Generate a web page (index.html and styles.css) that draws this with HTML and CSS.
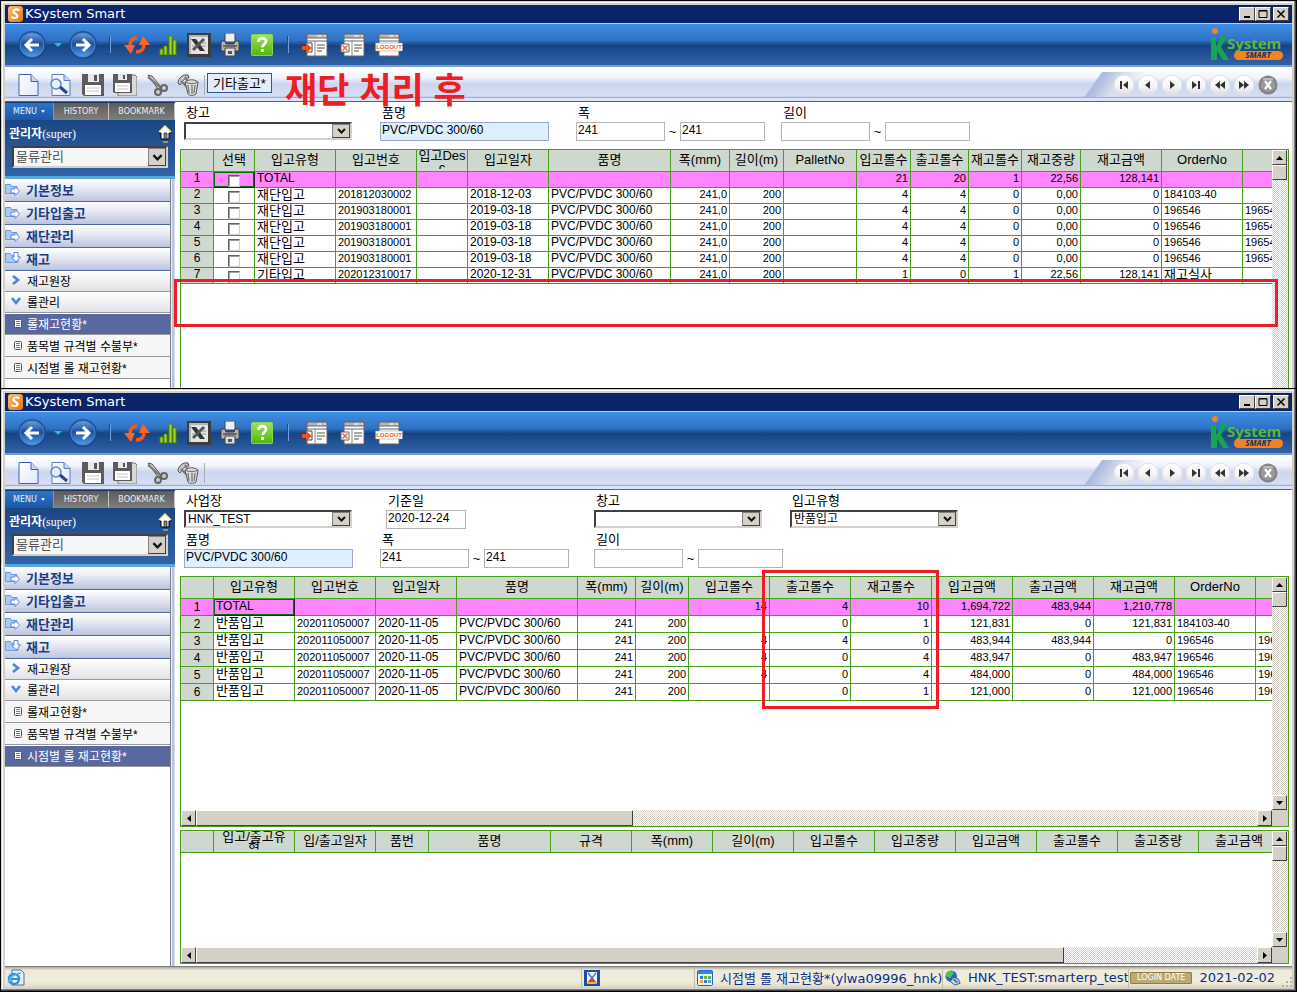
FILE: index.html
```html
<!DOCTYPE html>
<html lang="ko">
<head>
<meta charset="utf-8">
<title>KSystem Smart</title>
<link rel="stylesheet" href="styles.css">
</head>
<body>
<svg class="defs" aria-hidden="true">
  <defs>
    <linearGradient id="g-ball" x1="0" y1="0" x2="0" y2="1"><stop offset="0" stop-color="#6a9ed8"/><stop offset=".45" stop-color="#1d4f9c"/><stop offset="1" stop-color="#4f9be8"/></linearGradient>
    <linearGradient id="g-help" x1="0" y1="0" x2="0" y2="1"><stop offset="0" stop-color="#a0e060"/><stop offset="1" stop-color="#4fb808"/></linearGradient>
    <linearGradient id="g-nav" x1="0" y1="0" x2="0" y2="1"><stop offset="0" stop-color="#fff"/><stop offset=".6" stop-color="#f4f4f6"/><stop offset="1" stop-color="#dcdce2"/></linearGradient>
    <linearGradient id="g-page" x1="0" y1="0" x2="1" y2="1"><stop offset="0" stop-color="#fff"/><stop offset="1" stop-color="#dfe8fa"/></linearGradient>
    <linearGradient id="g-s" x1="0" y1="0" x2="1" y2="1"><stop offset="0" stop-color="#ffc070"/><stop offset="1" stop-color="#e8700c"/></linearGradient>
  </defs>
  <symbol id="i-app" viewBox="0 0 16 16"><rect width="15" height="16" rx="3" fill="url(#g-s)"/><path d="M11.500 4.500C9 2.500 5.500 3.500 5.500 5.700S10 8 9.500 10.200 6 12.500 3.500 11" fill="none" stroke="#fff" stroke-width="2.200"/></symbol>
  <symbol id="i-back" viewBox="0 0 30 30"><circle cx="15" cy="15" r="14" fill="#17458c" opacity=".7"/><circle cx="15" cy="15" r="12" fill="url(#g-ball)" stroke="#4c86cc"/><path d="M22 15H10M15 9l-6 6 6 6" fill="none" stroke="#fff" stroke-width="3"/></symbol>
  <symbol id="i-fwd" viewBox="0 0 30 30"><circle cx="15" cy="15" r="14" fill="#17458c" opacity=".7"/><circle cx="15" cy="15" r="12" fill="url(#g-ball)" stroke="#4c86cc"/><path d="M8 15h12M15 9l6 6-6 6" fill="none" stroke="#fff" stroke-width="3"/></symbol>
  <symbol id="i-drop" viewBox="0 0 8 4"><path d="M0 0h8L4 4z" fill="#2fb4e0"/></symbol>
  <symbol id="i-refresh" viewBox="0 0 26 20"><path d="M13 3C8 3 6 6 6 11" fill="none" stroke="#f4581c" stroke-width="3.500"/><path d="M0 10h11l-4 9z" fill="#ff6426"/><path d="M12 17c6 0 8-3 8-8" fill="none" stroke="#f4581c" stroke-width="3.500"/><path d="M15 10h11l-7-9z" fill="#ff6426"/></symbol>
  <symbol id="i-bars" viewBox="0 0 18 20"><path d="M1 14h3v6H1zM5 11h3v9H5zM10 1h3v19h-3zM14 5h3v15h-3z" fill="#a8d818" stroke="#4c8a0a"/></symbol>
  <symbol id="i-excel" viewBox="0 0 24 24"><path d="M0 0h24v24H0z" fill="#3c3c3c"/><path d="M2 2h19v19H2z" fill="#b4b4b4"/><path d="M4 4h17v17H4z" fill="#e4e4e4"/><path d="M4 6h5l9 12h-5z" fill="#333"/><path d="M17 6L6 17" stroke="#555" stroke-width="3"/><path d="M14 10h5M15 13h4M5 13h4" stroke="#999"/></symbol>
  <symbol id="i-print" viewBox="0 0 20 24"><path d="M5 0h10v9H5z" fill="#eee" stroke="#444"/><path d="M1 8h4l1 3h8l1-3h4v10H1z" fill="#b4b4b4" stroke="#3c3c3c"/><path d="M3 13h14" stroke="#666" stroke-width="2"/><path d="M5 15h10v8H5z" fill="#ddd" stroke="#444"/><path d="M8 18h4v3H8z" fill="#555"/></symbol>
  <symbol id="i-help" viewBox="0 0 22 22"><rect x=".5" y=".5" width="21" height="21" rx="1" fill="url(#g-help)" stroke="#8ad848"/><path d="M7.500 8c0-5 7.500-5 7.500-.8 0 3-3.500 3-3.500 6" fill="none" stroke="#fff" stroke-width="2.800"/><path d="M10 15h3v3h-3z" fill="#fff"/></symbol>
  <symbol id="i-win" viewBox="0 0 28 24"><path d="M6 1h20v22H6z" fill="#fff" stroke="#666"/><path d="M6 1h20v4H6z" fill="#aeb4bc" stroke="#666"/><path d="M16 3h5M23 3h2" stroke="#fff"/><path d="M6 8h20" stroke="#667"/><path d="M14 8v15" stroke="#888"/><path d="M16 12h8M16 15h8M16 18h5" stroke="#555"/></symbol>
  <symbol id="i-winout" viewBox="0 0 28 24"><use href="#i-win"/><path d="M5 10h6v9H5" fill="#fff" stroke="#444"/><path d="M1 13h4v-3l6 5-6 5v-3H1z" fill="#f05010"/></symbol>
  <symbol id="i-winx" viewBox="0 0 28 24"><use href="#i-win"/><path d="M3 11h8v8H3z" fill="#fff" stroke="#666"/><path d="M4.500 12.500l5 5M9.500 12.500l-5 5" stroke="#e86030" stroke-width="1.300"/></symbol>
  <symbol id="i-page" viewBox="0 0 22 22"><path d="M1 .5h12l7 7v14H1z" fill="url(#g-page)" stroke="#3c62b4"/><path d="M13 .5v7h7" fill="#c8d8f4" stroke="#3c62b4"/></symbol>
  <symbol id="i-find" viewBox="0 0 22 22"><path d="M2 .5h12l6 6v15H2z" fill="url(#g-page)" stroke="#5a7cc4"/><path d="M14 .5v6h6" fill="#c8d8f4" stroke="#5a7cc4"/><circle cx="6" cy="10" r="5" fill="#e4f0fc" stroke="#6284cc" stroke-width="1.500"/><path d="M10 13l7 6" stroke="#2c4888" stroke-width="3"/></symbol>
  <symbol id="i-save" viewBox="0 0 22 22"><path d="M0 0h22v22H2l-2-2z" fill="#5c5c5c"/><path d="M6 0h11v8H6z" fill="#e8e8e8"/><path d="M12 1h3v6h-3z" fill="#555"/><path d="M3 11h16v10H3z" fill="#fff"/><path d="M5 14h12M5 17h12" stroke="#c4c4c4"/></symbol>
  <symbol id="i-saveall" viewBox="0 0 24 22"><path d="M5 1h17l2 2v19H5z" fill="#d8d8d8" stroke="#777"/><path d="M0 0h19v19H1l-1-1z" fill="#5c5c5c"/><path d="M5 0h9v6H5z" fill="#e8e8e8"/><path d="M10 1h2v4h-2z" fill="#555"/><path d="M2 9h15v9H2z" fill="#fff"/><path d="M4 12h11M4 15h11" stroke="#c4c4c4"/></symbol>
  <symbol id="i-cut" viewBox="0 0 22 22"><path d="M1 1l4 1 9 11-3 2z" fill="#ccc" stroke="#555"/><path d="M1 3l7 6 6 5" stroke="#777" stroke-width="2"/><circle cx="17" cy="14" r="3" fill="#ccc" stroke="#666" stroke-width="2"/><circle cx="11" cy="18" r="3" fill="#ccc" stroke="#666" stroke-width="2"/></symbol>
  <symbol id="i-trash" viewBox="0 0 22 22"><path d="M1 9c0-5 5-9 10-8l1 3c-5 0-7 4-9 7z" fill="#c4c4c4" stroke="#555"/><path d="M4 7l6 6M8 3l3 5" stroke="#777" stroke-width="2"/><path d="M8 8c4-3 9-3 13 0l-2 12c-3 2-6 2-8 0z" fill="#ddd" stroke="#555"/><path d="M8 8c4 2 9 2 13 0M11 11l1 8M15 11v9M18 11l-1 8" stroke="#777" fill="none" stroke-width="1.300"/></symbol>
  <symbol id="n-ball" viewBox="0 0 22 22"><circle cx="11" cy="11" r="10" fill="url(#g-nav)" stroke="#e0e0e4"/></symbol>
  <symbol id="n-first" viewBox="0 0 22 22"><use href="#n-ball"/><path d="M7 7h2v8H7zM15 7v8l-5-4z" fill="#333"/></symbol>
  <symbol id="n-prev" viewBox="0 0 22 22"><use href="#n-ball"/><path d="M13 7v8l-5-4z" fill="#333"/></symbol>
  <symbol id="n-next" viewBox="0 0 22 22"><use href="#n-ball"/><path d="M9 7v8l5-4z" fill="#333"/></symbol>
  <symbol id="n-last" viewBox="0 0 22 22"><use href="#n-ball"/><path d="M7 7v8l5-4zM13 7h2v8h-2z" fill="#333"/></symbol>
  <symbol id="n-rew" viewBox="0 0 22 22"><use href="#n-ball"/><path d="M11 7v8l-5-4zM16 7v8l-5-4z" fill="#333"/></symbol>
  <symbol id="n-ff" viewBox="0 0 22 22"><use href="#n-ball"/><path d="M6 7v8l5-4zM11 7v8l5-4z" fill="#333"/></symbol>
  <symbol id="n-close" viewBox="0 0 22 22"><circle cx="11" cy="11" r="9.500" fill="#858585"/><circle cx="11" cy="11" r="7" fill="#9a9a9a"/><path d="M8 7l6 8M14 7l-6 8" stroke="#fff" stroke-width="2.200"/><path d="M6 5h10" stroke="#ddd"/></symbol>
  <symbol id="i-folder" viewBox="0 0 16 14"><path d="M.5 2.500h5l1 2H12v7H.5z" fill="#a8ccf8" stroke="#6a9ae8"/><path d="M6 7h4V4.500L14.500 9 10 13.500V11H6z" fill="#fff" stroke="#5a86d8"/></symbol>
  <symbol id="i-folderdown" viewBox="0 0 16 14"><path d="M.5 2.500h5l1 2H13v7H.5z" fill="#a8ccf8" stroke="#6a9ae8"/><path d="M9 1.500h4V6h2.500L11 11 6.500 6H9z" fill="#fff" stroke="#5a86d8"/></symbol>
  <symbol id="i-right" viewBox="0 0 10 10"><path d="M2 1l5 4-5 4" fill="none" stroke="#4c86dc" stroke-width="2.600"/></symbol>
  <symbol id="i-down" viewBox="0 0 10 10"><path d="M1 2l4 5 4-5" fill="none" stroke="#4c86dc" stroke-width="2.600"/></symbol>
  <symbol id="i-doc" viewBox="0 0 8 9"><rect x=".5" y=".5" width="7" height="8" rx="1" fill="#fff" stroke="#555"/><path d="M2 2.500h4M2 4.500h4M2 6.500h4" stroke="#777"/></symbol>
  <symbol id="i-home" viewBox="0 0 14 18"><path d="M7 1L1 7v1h2v6h8V8h2V7z" fill="#fff" stroke="#000"/><path d="M1 7l6-6 6 6" fill="none" stroke="#f8e890" stroke-width="1.500"/><path d="M6 8h3v6H6z" fill="#888" stroke="#000" stroke-width=".6"/><path d="M5 17h5" stroke="#f0e040"/></symbol>
  <symbol id="i-chev" viewBox="0 0 9 6"><path d="M1 1l3.500 3.500L8 1" fill="none" stroke="#111" stroke-width="2"/></symbol>
  <symbol id="a-up" viewBox="0 0 7 4"><path d="M3.500 0L7 4H0z"/></symbol>
  <symbol id="a-down" viewBox="0 0 7 4"><path d="M0 0h7L3.500 4z"/></symbol>
  <symbol id="a-left" viewBox="0 0 4 7"><path d="M4 0v7L0 3.500z"/></symbol>
  <symbol id="a-right" viewBox="0 0 4 7"><path d="M0 0v7l4-3.500z"/></symbol>
  <symbol id="i-min" viewBox="0 0 14 12"><path d="M4 9h6" stroke="#000" stroke-width="2"/></symbol>
  <symbol id="i-max" viewBox="0 0 14 12"><path d="M3 2.500h8v7H3zM3 3h8" fill="none" stroke="#000"/></symbol>
  <symbol id="i-x" viewBox="0 0 14 12"><path d="M3.500 2.500l7 7M10.500 2.500l-7 7" stroke="#000" stroke-width="1.500"/></symbol>
</svg>

<section class="window">
  <header class="titlebar">
    <svg width="16" height="16"><use href="#i-app"/></svg><h1>KSystem Smart</h1>
    <div class="caption-buttons"><button aria-label="Minimize"><svg width="14" height="12"><use href="#i-min"/></svg></button><button aria-label="Maximize"><svg width="14" height="12"><use href="#i-max"/></svg></button><button class="caption-close" aria-label="Close"><svg width="14" height="12"><use href="#i-x"/></svg></button></div>
  </header>
  <div class="bluebar">
    <div class="bluebar-tools">
      <button aria-label="Back"><svg width="30" height="30"><use href="#i-back"/></svg></button>
      <button aria-label="Recent"><svg width="8" height="4"><use href="#i-drop"/></svg></button>
      <button aria-label="Forward"><svg width="30" height="30"><use href="#i-fwd"/></svg></button>
      <i class="sep"></i>
      <button aria-label="Refresh"><svg width="26" height="20"><use href="#i-refresh"/></svg></button>
      <button aria-label="Chart"><svg width="18" height="20"><use href="#i-bars"/></svg></button>
      <button aria-label="Excel"><svg width="24" height="24"><use href="#i-excel"/></svg></button>
      <button aria-label="Print"><svg width="20" height="24"><use href="#i-print"/></svg></button>
      <button aria-label="Help"><svg width="22" height="22"><use href="#i-help"/></svg></button>
      <i class="sep"></i>
      <button aria-label="Exit"><svg width="28" height="24"><use href="#i-winout"/></svg></button>
      <button aria-label="Close all"><svg width="28" height="24"><use href="#i-winx"/></svg></button>
      <button aria-label="Logout"><svg width="28" height="24" viewBox="0 0 28 24"><path d="M4 1h20v22H4z" fill="#fff" stroke="#666"/><path d="M4 1h20v4H4z" fill="#aeb4bc" stroke="#666"/><path d="M14 3h5M21 3h2" stroke="#fff"/><path d="M4 8h20" stroke="#667"/><path d="M.5 10h27v8H.5z" fill="#fff" stroke="#888" stroke-width=".5"/><text x="14" y="16" text-anchor="middle" class="logout-text">LOGOUT</text></svg></button>
    </div>
    <svg width="76" height="36" viewBox="0 0 76 36"><circle cx="6" cy="4" r="3" fill="#f58220"/><path d="M2 10h5v10l6-12h6l-7 12 8 13h-6l-6-9v9H2z" fill="#16a550"/><text x="18" y="22" class="logo-name">System</text><rect x="25" y="24" width="49" height="9" rx="4.500" fill="#f58220"/><text x="49" y="31" text-anchor="middle" class="logo-sub">SMART</text></svg>
  </div>
  <div class="toolbar">
    <div class="toolbar-tools">
      <button aria-label="New"><svg width="22" height="22"><use href="#i-page"/></svg></button>
      <button aria-label="Search"><svg width="22" height="22"><use href="#i-find"/></svg></button>
      <button aria-label="Save"><svg width="22" height="22"><use href="#i-save"/></svg></button>
      <button aria-label="Save all"><svg width="24" height="22"><use href="#i-saveall"/></svg></button>
      <button aria-label="Cut"><svg width="22" height="22"><use href="#i-cut"/></svg></button>
      <button aria-label="Delete"><svg width="22" height="22"><use href="#i-trash"/></svg></button>
      <i class="sep sep-grey"></i>
    </div>
    <button class="action">기타출고*</button>
    <div class="nav">
      <button aria-label="First"><svg width="22" height="22"><use href="#n-first"/></svg></button>
      <button aria-label="Previous"><svg width="22" height="22"><use href="#n-prev"/></svg></button>
      <button aria-label="Next"><svg width="22" height="22"><use href="#n-next"/></svg></button>
      <button aria-label="Last"><svg width="22" height="22"><use href="#n-last"/></svg></button>
      <button aria-label="Page back"><svg width="22" height="22"><use href="#n-rew"/></svg></button>
      <button aria-label="Page forward"><svg width="22" height="22"><use href="#n-ff"/></svg></button>
      <button aria-label="Close page"><svg width="22" height="22"><use href="#n-close"/></svg></button>
    </div>
  </div>
  <div class="workspace">
    <aside class="sidebar">
      <div class="tabs"><button class="tab tab-on">MENU <svg width="4" height="3"><use href="#a-down"/></svg></button><button class="tab">HISTORY</button><button class="tab">BOOKMARK</button></div>
      <div class="account">
        <div class="account-row"><span>관리자<small>(super)</small></span><svg width="14" height="18"><use href="#i-home"/></svg></div>
        <div class="combo combo-module"><select aria-label="모듈"><option>물류관리</option></select><span class="combo-arrow"><svg width="11" height="7"><use href="#i-chev"/></svg></span></div>
      </div>
      <nav class="menu">
        <a class="m1" href="#"><svg width="16" height="14"><use href="#i-folder"/></svg>기본정보</a>
        <a class="m1" href="#"><svg width="16" height="14"><use href="#i-folder"/></svg>기타입출고</a>
        <a class="m1" href="#"><svg width="16" height="14"><use href="#i-folder"/></svg>재단관리</a>
        <a class="m1" href="#"><svg width="16" height="14"><use href="#i-folderdown"/></svg>재고</a>
        <a class="m2" href="#"><svg width="10" height="10"><use href="#i-right"/></svg>재고원장</a>
        <a class="m2" href="#"><svg width="10" height="10"><use href="#i-down"/></svg>롤관리</a>
        <a class="m3 m3-on" href="#"><svg width="8" height="9"><use href="#i-doc"/></svg>롤재고현황*</a>
        <a class="m3" href="#"><svg width="8" height="9"><use href="#i-doc"/></svg>품목별 규격별 수불부*</a>
        <a class="m3" href="#"><svg width="8" height="9"><use href="#i-doc"/></svg>시점별 롤 재고현황*</a>
      </nav>
    </aside>
    <main class="content">
      <div class="filters filters-a">
        <div class="field"><label for="a1">창고</label><div class="combo"><select id="a1"><option></option></select><span class="combo-arrow"><svg width="9" height="6"><use href="#i-chev"/></svg></span></div></div>
        <div class="field"><label for="a2">품명</label><input id="a2" class="wide" value="PVC/PVDC 300/60"></div>
        <div class="field"><label for="a3">폭</label><div class="range"><input id="a3" value="241"><span>~</span><input aria-label="폭 끝" value="241"></div></div>
        <div class="field"><label for="a4">길이</label><div class="range"><input id="a4"><span>~</span><input aria-label="길이 끝"></div></div>
      </div>
      <div class="sheet sheet-top">
        <div class="sheet-view">
          <table class="rows16">
            <colgroup><col class="w33"><col class="w41"><col class="w81"><col class="w81"><col class="w51"><col class="w81"><col class="w122"><col class="w59"><col class="w54"><col class="w73"><col class="w54"><col class="w58"><col class="w53"><col class="w59"><col class="w81"><col class="w81"><col class="w81"></colgroup>
            <thead><tr><th></th><th>선택</th><th>입고유형</th><th>입고번호</th><th><div class="two">입고Desc</div></th><th>입고일자</th><th>품명</th><th>폭(mm)</th><th>길이(m)</th><th>PalletNo</th><th>입고롤수</th><th>출고롤수</th><th>재고롤수</th><th>재고중량</th><th>재고금액</th><th>OrderNo</th><th></th></tr></thead>
            <tbody>
              <tr class="total"><td class="no">1</td><td class="cur c"><input type="checkbox" aria-label="1"></td><td>TOTAL</td><td></td><td></td><td></td><td></td><td></td><td></td><td></td><td class="n">21</td><td class="n">20</td><td class="n">1</td><td class="n">22,56</td><td class="n">128,141</td><td></td><td></td></tr>
              <tr><td class="no">2</td><td class="c"><input type="checkbox" aria-label="2"></td><td class="k">재단입고</td><td class="s">201812030002</td><td></td><td>2018-12-03</td><td>PVC/PVDC 300/60</td><td class="n">241,0</td><td class="n">200</td><td></td><td class="n">4</td><td class="n">4</td><td class="n">0</td><td class="n">0,00</td><td class="n">0</td><td class="s">184103-40</td><td></td></tr>
              <tr><td class="no">3</td><td class="c"><input type="checkbox" aria-label="3"></td><td class="k">재단입고</td><td class="s">201903180001</td><td></td><td>2019-03-18</td><td>PVC/PVDC 300/60</td><td class="n">241,0</td><td class="n">200</td><td></td><td class="n">4</td><td class="n">4</td><td class="n">0</td><td class="n">0,00</td><td class="n">0</td><td class="s">196546</td><td class="s">196546</td></tr>
              <tr><td class="no">4</td><td class="c"><input type="checkbox" aria-label="4"></td><td class="k">재단입고</td><td class="s">201903180001</td><td></td><td>2019-03-18</td><td>PVC/PVDC 300/60</td><td class="n">241,0</td><td class="n">200</td><td></td><td class="n">4</td><td class="n">4</td><td class="n">0</td><td class="n">0,00</td><td class="n">0</td><td class="s">196546</td><td class="s">196546</td></tr>
              <tr><td class="no">5</td><td class="c"><input type="checkbox" aria-label="5"></td><td class="k">재단입고</td><td class="s">201903180001</td><td></td><td>2019-03-18</td><td>PVC/PVDC 300/60</td><td class="n">241,0</td><td class="n">200</td><td></td><td class="n">4</td><td class="n">4</td><td class="n">0</td><td class="n">0,00</td><td class="n">0</td><td class="s">196546</td><td class="s">196546</td></tr>
              <tr><td class="no">6</td><td class="c"><input type="checkbox" aria-label="6"></td><td class="k">재단입고</td><td class="s">201903180001</td><td></td><td>2019-03-18</td><td>PVC/PVDC 300/60</td><td class="n">241,0</td><td class="n">200</td><td></td><td class="n">4</td><td class="n">4</td><td class="n">0</td><td class="n">0,00</td><td class="n">0</td><td class="s">196546</td><td class="s">196546</td></tr>
              <tr><td class="no">7</td><td class="c"><input type="checkbox" aria-label="7"></td><td class="k">기타입고</td><td class="s">202012310017</td><td></td><td>2020-12-31</td><td>PVC/PVDC 300/60</td><td class="n">241,0</td><td class="n">200</td><td></td><td class="n">1</td><td class="n">0</td><td class="n">1</td><td class="n">22,56</td><td class="n">128,141</td><td class="k">재고실사</td><td></td></tr>
            </tbody>
          </table>
        </div>
        <div class="vscroll"><button aria-label="위로"><svg width="7" height="4"><use href="#a-up"/></svg></button><i class="thumb"></i></div>
      </div>
    </main>
  </div>
  <div class="note">재단 처리 후</div>
  <div class="mark mark-row"></div>
</section>

<section class="window window-last">
  <header class="titlebar">
    <svg width="16" height="16"><use href="#i-app"/></svg><h1>KSystem Smart</h1>
    <div class="caption-buttons"><button aria-label="Minimize"><svg width="14" height="12"><use href="#i-min"/></svg></button><button aria-label="Maximize"><svg width="14" height="12"><use href="#i-max"/></svg></button><button class="caption-close" aria-label="Close"><svg width="14" height="12"><use href="#i-x"/></svg></button></div>
  </header>
  <div class="bluebar">
    <div class="bluebar-tools">
      <button aria-label="Back"><svg width="30" height="30"><use href="#i-back"/></svg></button>
      <button aria-label="Recent"><svg width="8" height="4"><use href="#i-drop"/></svg></button>
      <button aria-label="Forward"><svg width="30" height="30"><use href="#i-fwd"/></svg></button>
      <i class="sep"></i>
      <button aria-label="Refresh"><svg width="26" height="20"><use href="#i-refresh"/></svg></button>
      <button aria-label="Chart"><svg width="18" height="20"><use href="#i-bars"/></svg></button>
      <button aria-label="Excel"><svg width="24" height="24"><use href="#i-excel"/></svg></button>
      <button aria-label="Print"><svg width="20" height="24"><use href="#i-print"/></svg></button>
      <button aria-label="Help"><svg width="22" height="22"><use href="#i-help"/></svg></button>
      <i class="sep"></i>
      <button aria-label="Exit"><svg width="28" height="24"><use href="#i-winout"/></svg></button>
      <button aria-label="Close all"><svg width="28" height="24"><use href="#i-winx"/></svg></button>
      <button aria-label="Logout"><svg width="28" height="24" viewBox="0 0 28 24"><path d="M4 1h20v22H4z" fill="#fff" stroke="#666"/><path d="M4 1h20v4H4z" fill="#aeb4bc" stroke="#666"/><path d="M14 3h5M21 3h2" stroke="#fff"/><path d="M4 8h20" stroke="#667"/><path d="M.5 10h27v8H.5z" fill="#fff" stroke="#888" stroke-width=".5"/><text x="14" y="16" text-anchor="middle" class="logout-text">LOGOUT</text></svg></button>
    </div>
    <svg width="76" height="36" viewBox="0 0 76 36"><circle cx="6" cy="4" r="3" fill="#f58220"/><path d="M2 10h5v10l6-12h6l-7 12 8 13h-6l-6-9v9H2z" fill="#16a550"/><text x="18" y="22" class="logo-name">System</text><rect x="25" y="24" width="49" height="9" rx="4.500" fill="#f58220"/><text x="49" y="31" text-anchor="middle" class="logo-sub">SMART</text></svg>
  </div>
  <div class="toolbar">
    <div class="toolbar-tools">
      <button aria-label="New"><svg width="22" height="22"><use href="#i-page"/></svg></button>
      <button aria-label="Search"><svg width="22" height="22"><use href="#i-find"/></svg></button>
      <button aria-label="Save"><svg width="22" height="22"><use href="#i-save"/></svg></button>
      <button aria-label="Save all"><svg width="24" height="22"><use href="#i-saveall"/></svg></button>
      <button aria-label="Cut"><svg width="22" height="22"><use href="#i-cut"/></svg></button>
      <button aria-label="Delete"><svg width="22" height="22"><use href="#i-trash"/></svg></button>
      <i class="sep sep-grey"></i>
    </div>
    <div class="nav">
      <button aria-label="First"><svg width="22" height="22"><use href="#n-first"/></svg></button>
      <button aria-label="Previous"><svg width="22" height="22"><use href="#n-prev"/></svg></button>
      <button aria-label="Next"><svg width="22" height="22"><use href="#n-next"/></svg></button>
      <button aria-label="Last"><svg width="22" height="22"><use href="#n-last"/></svg></button>
      <button aria-label="Page back"><svg width="22" height="22"><use href="#n-rew"/></svg></button>
      <button aria-label="Page forward"><svg width="22" height="22"><use href="#n-ff"/></svg></button>
      <button aria-label="Close page"><svg width="22" height="22"><use href="#n-close"/></svg></button>
    </div>
  </div>
  <div class="workspace">
    <aside class="sidebar">
      <div class="tabs"><button class="tab tab-on">MENU <svg width="4" height="3"><use href="#a-down"/></svg></button><button class="tab">HISTORY</button><button class="tab">BOOKMARK</button></div>
      <div class="account">
        <div class="account-row"><span>관리자<small>(super)</small></span><svg width="14" height="18"><use href="#i-home"/></svg></div>
        <div class="combo combo-module"><select aria-label="모듈"><option>물류관리</option></select><span class="combo-arrow"><svg width="11" height="7"><use href="#i-chev"/></svg></span></div>
      </div>
      <nav class="menu">
        <a class="m1" href="#"><svg width="16" height="14"><use href="#i-folder"/></svg>기본정보</a>
        <a class="m1" href="#"><svg width="16" height="14"><use href="#i-folder"/></svg>기타입출고</a>
        <a class="m1" href="#"><svg width="16" height="14"><use href="#i-folder"/></svg>재단관리</a>
        <a class="m1" href="#"><svg width="16" height="14"><use href="#i-folderdown"/></svg>재고</a>
        <a class="m2" href="#"><svg width="10" height="10"><use href="#i-right"/></svg>재고원장</a>
        <a class="m2" href="#"><svg width="10" height="10"><use href="#i-down"/></svg>롤관리</a>
        <a class="m3" href="#"><svg width="8" height="9"><use href="#i-doc"/></svg>롤재고현황*</a>
        <a class="m3" href="#"><svg width="8" height="9"><use href="#i-doc"/></svg>품목별 규격별 수불부*</a>
        <a class="m3 m3-on" href="#"><svg width="8" height="9"><use href="#i-doc"/></svg>시점별 롤 재고현황*</a>
      </nav>
    </aside>
    <main class="content">
      <div class="filters filters-b">
        <div class="field"><label for="b1">사업장</label><div class="combo"><select id="b1"><option>HNK_TEST</option></select><span class="combo-arrow"><svg width="9" height="6"><use href="#i-chev"/></svg></span></div></div>
        <div class="field"><label for="b2">기준일</label><input id="b2" class="date" value="2020-12-24"></div>
        <div class="field"><label for="b3">창고</label><div class="combo"><select id="b3"><option></option></select><span class="combo-arrow"><svg width="9" height="6"><use href="#i-chev"/></svg></span></div></div>
        <div class="field"><label for="b4">입고유형</label><div class="combo"><select id="b4"><option>반품입고</option></select><span class="combo-arrow"><svg width="9" height="6"><use href="#i-chev"/></svg></span></div></div>
      </div>
      <div class="filters filters-c">
        <div class="field"><label for="c1">품명</label><input id="c1" class="wide" value="PVC/PVDC 300/60"></div>
        <div class="field"><label for="c2">폭</label><div class="range"><input id="c2" value="241"><span>~</span><input aria-label="폭 끝" value="241"></div></div>
        <div class="field"><label for="c3">길이</label><div class="range"><input id="c3"><span>~</span><input aria-label="길이 끝"></div></div>
      </div>
      <div class="sheet sheet-main">
        <div class="sheet-view">
          <table class="rows17">
            <colgroup><col class="w33"><col class="w81"><col class="w81"><col class="w81"><col class="w121"><col class="w58"><col class="w53"><col class="w81"><col class="w81"><col class="w81"><col class="w81"><col class="w81"><col class="w81"><col class="w81"><col class="w81"></colgroup>
            <thead><tr><th></th><th>입고유형</th><th>입고번호</th><th>입고일자</th><th>품명</th><th>폭(mm)</th><th>길이(m)</th><th>입고롤수</th><th>출고롤수</th><th>재고롤수</th><th>입고금액</th><th>출고금액</th><th>재고금액</th><th>OrderNo</th><th></th></tr></thead>
            <tbody>
              <tr class="total"><td class="no">1</td><td class="cur">TOTAL</td><td></td><td></td><td></td><td></td><td></td><td class="n">14</td><td class="n">4</td><td class="n">10</td><td class="n">1,694,722</td><td class="n">483,944</td><td class="n">1,210,778</td><td></td><td></td></tr>
              <tr><td class="no">2</td><td class="k">반품입고</td><td class="s">202011050007</td><td>2020-11-05</td><td>PVC/PVDC 300/60</td><td class="n">241</td><td class="n">200</td><td class="n"></td><td class="n">0</td><td class="n">1</td><td class="n">121,831</td><td class="n">0</td><td class="n">121,831</td><td class="s">184103-40</td><td></td></tr>
              <tr><td class="no">3</td><td class="k">반품입고</td><td class="s">202011050007</td><td>2020-11-05</td><td>PVC/PVDC 300/60</td><td class="n">241</td><td class="n">200</td><td class="n">4</td><td class="n">4</td><td class="n">0</td><td class="n">483,944</td><td class="n">483,944</td><td class="n">0</td><td class="s">196546</td><td class="s">196546</td></tr>
              <tr><td class="no">4</td><td class="k">반품입고</td><td class="s">202011050007</td><td>2020-11-05</td><td>PVC/PVDC 300/60</td><td class="n">241</td><td class="n">200</td><td class="n">4</td><td class="n">0</td><td class="n">4</td><td class="n">483,947</td><td class="n">0</td><td class="n">483,947</td><td class="s">196546</td><td class="s">196546</td></tr>
              <tr><td class="no">5</td><td class="k">반품입고</td><td class="s">202011050007</td><td>2020-11-05</td><td>PVC/PVDC 300/60</td><td class="n">241</td><td class="n">200</td><td class="n">4</td><td class="n">0</td><td class="n">4</td><td class="n">484,000</td><td class="n">0</td><td class="n">484,000</td><td class="s">196546</td><td class="s">196546</td></tr>
              <tr><td class="no">6</td><td class="k">반품입고</td><td class="s">202011050007</td><td>2020-11-05</td><td>PVC/PVDC 300/60</td><td class="n">241</td><td class="n">200</td><td class="n"></td><td class="n">0</td><td class="n">1</td><td class="n">121,000</td><td class="n">0</td><td class="n">121,000</td><td class="s">196546</td><td class="s">196546</td></tr>
            </tbody>
          </table>
        </div>
        <div class="vscroll"><button aria-label="위로"><svg width="7" height="4"><use href="#a-up"/></svg></button><i class="thumb"></i><i class="track"></i><button aria-label="아래로"><svg width="7" height="4"><use href="#a-down"/></svg></button></div>
        <div class="hscroll"><button aria-label="왼쪽"><svg width="4" height="7"><use href="#a-left"/></svg></button><i class="lane"><i class="thumb" style="width:41.2%"></i></i><button aria-label="오른쪽"><svg width="4" height="7"><use href="#a-right"/></svg></button></div>
        <i class="corner"></i>
      </div>
      <div class="sheet sheet-sub">
        <div class="sheet-view">
          <table>
            <colgroup><col class="w33"><col class="w81"><col class="w81"><col class="w53"><col class="w122"><col class="w81"><col class="w81"><col class="w81"><col class="w81"><col class="w81"><col class="w81"><col class="w81"><col class="w81"><col class="w81"></colgroup>
            <thead><tr><th></th><th><div class="two two-inset">입고/출고유형</div></th><th>입/출고일자</th><th>품번</th><th>품명</th><th>규격</th><th>폭(mm)</th><th>길이(m)</th><th>입고롤수</th><th>입고중량</th><th>입고금액</th><th>출고롤수</th><th>출고중량</th><th>출고금액</th></tr></thead>
          </table>
        </div>
        <div class="vscroll"><button aria-label="위로"><svg width="7" height="4"><use href="#a-up"/></svg></button><i class="thumb"></i><i class="track"></i><button aria-label="아래로"><svg width="7" height="4"><use href="#a-down"/></svg></button></div>
        <div class="hscroll"><button aria-label="왼쪽"><svg width="4" height="7"><use href="#a-left"/></svg></button><i class="lane"><i class="thumb" style="width:81.8%"></i></i><button aria-label="오른쪽"><svg width="4" height="7"><use href="#a-right"/></svg></button></div>
        <i class="corner"></i>
      </div>
    </main>
  </div>
  <footer class="status">
    <div class="st-main"><svg width="18" height="18" viewBox="0 0 18 18"><path d="M5 1h9l3 3v12H5z" fill="#e8effa" stroke="#5a68a0"/><circle cx="7" cy="10" r="5" fill="none" stroke="#2f94d8" stroke-width="2.500"/><path d="M3 10h8" stroke="#2f94d8" stroke-width="2"/><path d="M1 14C3 8 9 4 14 4" fill="none" stroke="#58b8ec" stroke-width="1.300"/></svg></div>
    <div class="st-wait"><svg width="16" height="16" viewBox="0 0 16 16"><path d="M0 0h16v16H0z" fill="#1d4ea0"/><path d="M3 2h10v12H3z" fill="#f0f4fa"/><path d="M4 3l4 5 4-5M4 13l4-5 4 5" fill="none" stroke="#4a78c0" stroke-width="1.500"/><path d="M8 8l5 6H3z" fill="#f43c10"/><path d="M4 12h8v2H4z" fill="#ffb820"/></svg></div>
    <div class="st-page"><svg width="16" height="16" viewBox="0 0 16 16"><rect x=".5" y=".5" width="15" height="15" rx="1" fill="#e8f4ff" stroke="#1c68c8"/><path d="M1 1h14v3H1z" fill="#3488e0"/><path d="M3 6h3v3H3zM7 10h3v3H7z" fill="#2c7cd4"/><path d="M7 6h3v3H7zM11 6h3v3h-3z" fill="#6cb840"/><path d="M3 10h3v3H3z" fill="#f0a030"/><path d="M11 10h3v3h-3z" fill="#58a0e0"/></svg><span>시점별 롤 재고현황*(ylwa09996_hnk)</span></div>
    <div class="st-db"><svg width="16" height="18" viewBox="0 0 18 18"><circle cx="7" cy="7" r="6.500" fill="#2468c8"/><path d="M3 2c3-2 6-1 7 1L8 6 6 9 2 8C0 6 1 4 3 2z" fill="#58c040"/><path d="M9 8l6 2 2 5-6 2-5-4z" fill="#c8d4e0" stroke="#30506c"/><path d="M9 10l5 4" stroke="#2880b0" stroke-width="2"/></svg><span>HNK_TEST:smarterp_test</span></div>
    <div class="st-date"><b>LOGIN DATE</b><span>2021-02-02</span><svg class="grip" width="10" height="10" viewBox="0 0 10 10"><path d="M8 0h2v2H8zM4 4h2v2H4zM8 4h2v2H8zM0 8h2v2H0zM4 8h2v2H4zM8 8h2v2H8z" fill="#b8b4a4"/></svg></div>
  </footer>
  <div class="mark mark-cols"></div>
</section>
</body>
</html>
```
FILE: styles.css
```css
* { box-sizing: border-box; }

body {
  margin: 0;
  min-height: 100vh;
  display: flex;
  flex-direction: column;
  background: #000;
  color: #000;
  font-family: "Liberation Sans", "Noto Sans CJK KR", sans-serif;
  font-size: 13px;
}

.defs { position: absolute; width: 0; height: 0; }
svg { display: block; flex: none; }
button { margin: 0; padding: 0; border: 0; background: none; font: inherit; color: inherit; }
i { display: block; }

.logout-text { font: bold 6px "Liberation Sans", sans-serif; fill: #ee5a1c; }
.logo-name { font: bold 15px "Open Sans", sans-serif; fill: #5cb83c; }
.logo-sub { font: italic bold 8px "Open Sans", sans-serif; fill: #20305c; }

/* window frame */
.window {
  position: relative;
  display: flex;
  flex-direction: column;
  border: 1px solid #000;
  border-bottom: 0;
  padding: 4px 4px 0;
  background: #d4d0c8;
  box-shadow: inset -1px 0 #404040, inset -2px 0 #808080, inset 1px 1px #d4d0c8, inset 2px 2px #fff;
}
.window-last {
  flex: 1;
  border-bottom: 1px solid #000;
  padding-bottom: 3px;
  box-shadow: inset -1px -1px #404040, inset -2px -2px #808080, inset 1px 1px #d4d0c8, inset 2px 2px #fff;
}

.titlebar {
  display: flex;
  align-items: center;
  height: 19px;
  padding: 0 3px;
  background: #0a246a;
  border-bottom: 1px solid #c4ccdc;
  color: #fff;
}
.titlebar h1 { margin: 0 auto 0 1px; font: 13px/18px "DejaVu Sans", sans-serif; }
.caption-buttons { display: flex; }
.caption-buttons button, .combo-arrow, .vscroll button, .hscroll button, .thumb {
  background: #d4d0c8;
  border: 1px solid;
  border-color: #fff #404040 #404040 #fff;
  display: grid;
  place-items: center;
}
.caption-buttons button { width: 16px; height: 14px; }
.caption-buttons .caption-close { margin-left: 2px; }

.bluebar {
  display: flex;
  justify-content: space-between;
  align-items: center;
  height: 43px;
  padding: 0 7px 0 12px;
  background: linear-gradient(#3f8fe4, #2f71c4 40%, #174480 52%, #1d4c8e 64%, #2f62a8);
  border-bottom: 2px solid #7a9cd0;
}
.bluebar-tools {
  display: grid;
  grid-template-columns: 30px 21px 30px 24px 30px 32px 30px 31px 34px 18px 36px 38px 36px;
  place-items: center;
}
.sep { width: 2px; height: 17px; background: #6fa0dc; border-left: 1px solid #1c4888; }
.sep-grey { width: 1px; height: 20px; border: 0; background: #a8acb8; }

.toolbar {
  display: flex;
  align-items: center;
  height: 35px;
  padding-left: 8px;
  background: linear-gradient(#fff, #f2f4fb 30%, #cdd6ee 48%, #d6def4 84%, #8c98b4 86%, #d8e4fa 90%, #d8e4fa 96%, #3c68b0 97%);
}
.toolbar-tools {
  display: grid;
  grid-template-columns: 32px 32px 32px 32px 33px 28px 5px;
  place-items: center;
}
.action {
  height: 20px;
  margin-bottom: 3px;
  padding: 0 5px;
  border: 1px solid #2c58a0;
  background: #e4ecf8;
  line-height: 17px;
}
.nav {
  display: grid;
  grid-template-columns: repeat(7, 24px);
  place-items: center;
  margin-left: auto;
  height: 25px;
  padding: 0 12px 0 38px;
  background: linear-gradient(125deg, transparent 22px, #a9b8e0 24px, #dde0ee 44px, transparent 60px);
}

.workspace { display: flex; flex: 1; background: #fff; }

/* sidebar */
.sidebar {
  width: 170px;
  flex: none;
  display: flex;
  flex-direction: column;
}
.tabs { display: flex; height: 18px; background: #2c63b0; border-top: 1px solid #1c3460; }
.tab {
  height: 17px;
  width: 55px;
  background: linear-gradient(#5c5c5c, #7c7c7c);
  border: solid #c4c4c4;
  border-width: 0 1px 0 0;
  border-bottom: 1px solid #4a8ad8;
  color: #eee;
  font: 8px "DejaVu Sans", sans-serif;
}
.tab:last-child { flex: 1; }
.tab-on {
  width: 49px;
  display: flex;
  align-items: center;
  justify-content: center;
  gap: 4px;
  background: linear-gradient(#2c74cc, #1c58a8);
  border-color: #58a0e8;
  border-bottom: 0;
  fill: #fff;
}
.account {
  height: 59px;
  padding: 5px 3px 0 4px;
  background: linear-gradient(#1b4684, #3264a8);
  border-bottom: 3px solid #58a8dc;
}
.account-row { display: flex; justify-content: space-between; height: 21px; color: #fff; font-size: 12px; line-height: 18px; font-weight: bold; }
.account-row small { font: 12px "Liberation Serif", serif; }
.menu {
  flex: 1;
  padding-bottom: 9px;
  border-right: 1px solid #808080;
  margin-right: 4px;
  box-shadow: 1px 0 #e8eefa, 3px 0 #b8c4e0, 4px 0 #d4dcf0;
}
.menu a { display: flex; align-items: center; color: #000; text-decoration: none; white-space: nowrap; }
.menu .m1 {
  height: 23px;
  gap: 5px;
  padding-bottom: 2px;
  background: linear-gradient(#fff, #e8eaf4 40%, #bcc4de);
  border-bottom: 1px solid #5068a0;
  color: #203c80;
  font-weight: bold;
}
.menu .m2 {
  height: 21px;
  gap: 6px;
  padding: 0 0 2px 6px;
  background: linear-gradient(#fff, #e2e2e6);
  border-bottom: 1px solid #989898;
  font-size: 12px;
}
.menu .m3 {
  height: 22px;
  gap: 5px;
  padding-left: 9px;
  background: #f6f6f6;
  border-bottom: 1px solid #989898;
  font-size: 12px;
}
.menu .m3-on { background: #5a68a0; color: #fff; box-shadow: inset 0 1px #fff; }

/* filters */
.content {
  flex: 1;
  min-width: 0;
  display: flex;
  flex-direction: column;
  padding: 3px 3px 0 5px;
}
.window-last .content { padding-bottom: 2px; }
.filters { display: grid; padding-left: 4px; margin-bottom: 8px; }
.filters-a { grid-template-columns: 196px 196px 205px 1fr; }
.filters-b { grid-template-columns: 202px 208px 196px 1fr; margin-bottom: 3px; }
.filters-c { grid-template-columns: 196px 214px 1fr; }
.field label { display: block; height: 17px; padding-left: 2px; line-height: 15px; }
.field input {
  display: block;
  width: 85px;
  height: 19px;
  padding: 0 1px 3px;
  border: 1px solid #b4b4b4;
  background: #fff;
  font: 12px "Liberation Sans", sans-serif;
}
.field .wide { width: 169px; background: #def0ff; border-color: #9ca8cc; }
.field .date { width: 80px; }
.range { display: flex; }
.range input:first-child { width: 89px; }
.range span { width: 15px; text-align: center; line-height: 19px; }
.combo {
  display: grid;
  grid-template-columns: 1fr 18px;
  width: 168px;
  height: 18px;
  margin-bottom: 1px;
  border: 2px solid;
  border-color: #404040 #d4d0c8 #d4d0c8 #404040;
  background: #fff;
}
.combo select {
  grid-area: 1 / 1 / 2 / 3;
  appearance: none;
  border: 0;
  padding: 0 2px;
  margin: 0;
  background: none;
  color: #000;
  font: 12px/14px "Liberation Sans", "Noto Sans CJK KR", sans-serif;
}
.combo-arrow { grid-area: 1 / 2; pointer-events: none; border-color: #808080 #404040 #404040 #808080; }
.combo-module { width: 156px; height: 22px; margin-left: 3px; background: #f6f6f6; }
.combo-module select { color: #555; font-size: 13px; }

/* spreadsheet */
.sheet {
  display: grid;
  grid-template-columns: 1fr 16px;
  grid-template-rows: 1fr 16px;
  border: 1px solid #48a018;
  min-height: 0;
}
.sheet-top { flex: 1; grid-template-rows: 1fr; border-bottom: 0; }
.sheet-main { flex: 253 1 0; margin-bottom: 3px; }
.sheet-sub { flex: 134 1 0; }
.sheet-view { overflow: hidden; min-width: 0; min-height: 0; }
table { width: 100%; table-layout: fixed; border-collapse: separate; border-spacing: 0; }
th, td {
  padding: 0 2px;
  border: solid #48a018;
  border-width: 0 1px 1px 0;
  overflow: hidden;
  white-space: nowrap;
}
th { height: 22px; padding: 0 0 2px; background: #ced8ce; font-weight: normal; line-height: 18px; }
.two { height: 19px; overflow: hidden; white-space: normal; word-break: break-all; line-height: 12px; }
.two-inset { padding: 0 6px; line-height: 11px; }
td { font-size: 12px; line-height: 14px; }
.rows16 td { height: 16px; padding-bottom: 2px; line-height: 13px; }
.rows17 td { height: 17px; padding-bottom: 2px; line-height: 14px; }
.rows17 td.no { padding-bottom: 0; }
td.k { font-size: 13px; }
td.s { font-size: 11px; }
td.n { font-size: 11px; text-align: right; }
td.no { background: #ced8ce; text-align: center; }
td.c { text-align: center; }
.total td { background: #ff84ff; }
.total .cur { box-shadow: inset 0 0 0 1px #007000; border-color: #202020; }
td input {
  appearance: none;
  display: block;
  width: 12px;
  height: 12px;
  margin: 2px auto 0 12px;
  border: 1px solid;
  border-color: #606060 #d4d0c8 #d4d0c8 #606060;
  box-shadow: inset 1px 1px #a0a0a0;
  background: #fff;
}
.rows16 td.c { padding-bottom: 0; }
.w33 { width: 33px; } .w41 { width: 41px; } .w51 { width: 51px; } .w53 { width: 53px; }
.w54 { width: 54px; } .w58 { width: 58px; } .w59 { width: 59px; } .w73 { width: 73px; }
.w81 { width: 81px; } .w121 { width: 121px; } .w122 { width: 122px; }

.vscroll, .hscroll {
  display: flex;
  background: repeating-conic-gradient(#d4d0c8 0 25%, #fff 0 50%) 0 0 / 2px 2px;
}
.vscroll { flex-direction: column; }
.vscroll button, .vscroll .thumb { height: 15px; width: 15px; flex: none; }
.vscroll .track, .hscroll .lane { flex: 1; }
.hscroll button { width: 15px; height: 16px; }
.hscroll .thumb { height: 16px; }
.corner { background: #d4d0c8; }

/* status bar */
.status {
  display: flex;
  height: 22px;
  background: linear-gradient(#a8a498, #ece9d8 3px, #f0eddf 60%, #ece8d0 80%, #d8d4c4);
  border-top: 1px solid #808080;
  color: #0a2c8c;
  font: 13px "DejaVu Sans", "Noto Sans CJK KR", sans-serif;
}
.status > div { display: flex; align-items: center; gap: 7px; padding-left: 2px; border-left: 1px solid #c4c0b0; white-space: nowrap; }
.status .st-main { flex: 1; border: 0; }
.st-wait { width: 113px; }
.st-page { width: 248px; }
.st-db { width: 186px; font-size: 12px; }
.st-page span { font-size: 12px; }
.status .st-date { width: 164px; padding-left: 1px; }
.st-date b {
  height: 12px;
  padding: 0 6px;
  border: 1px solid #907c48;
  border-radius: 1px;
  background: #bcaa74;
  color: #fff;
  font: 8px/10px "DejaVu Sans", sans-serif;
}
.status .st-page span, .status .st-db span { font-size: 13px; }
.grip { margin: 8px 2px 0 auto; }

/* annotations */
.note {
  position: absolute;
  left: 284px;
  top: 67px;
  color: #ee1c24;
  font: bold 35px/40px "Noto Sans CJK KR", sans-serif;
}
.mark { position: absolute; border: 3px solid #ee1c24; }
.mark-row { left: 173px; right: 18px; top: 278px; height: 48px; }
.mark-cols { left: 761px; width: 177px; top: 181px; height: 139px; }
```
